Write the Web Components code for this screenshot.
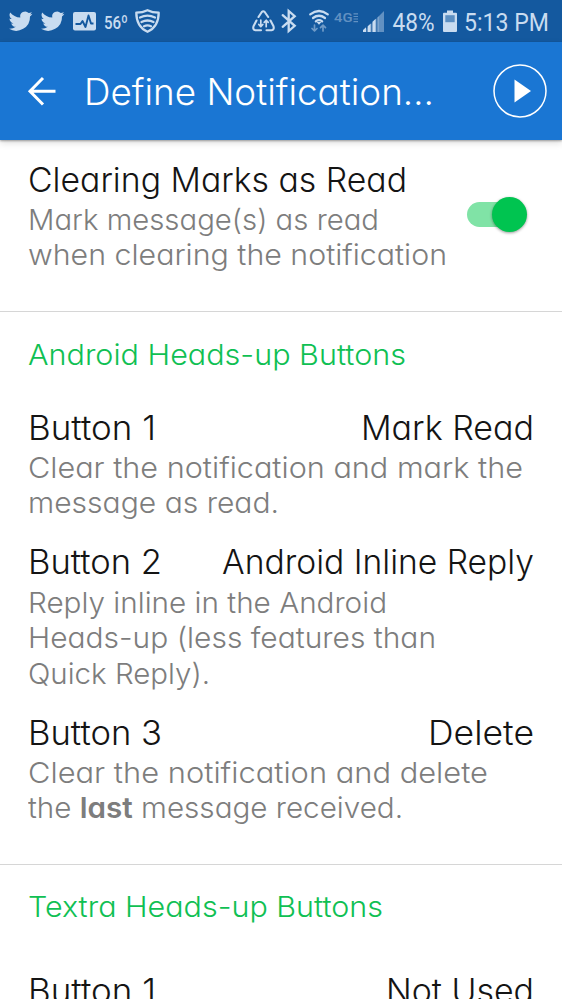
<!DOCTYPE html>
<html lang="en">
<head>
<meta charset="utf-8">
<title>Define Notification</title>
<style>
html,body{margin:0;height:999px;overflow:hidden;background:#fff}
body{font-family:Inter,"Liberation Sans",sans-serif;font-weight:300;font-feature-settings:"cv11","ss03";color:#141414}
</style>
</head>
<body>
<settings-screen></settings-screen>
<script>
const define=(name,html,init)=>customElements.define(name,class extends HTMLElement{
  connectedCallback(){
    if(this.shadowRoot)return;
    const t=document.createElement('template');
    t.innerHTML=html;
    this.attachShadow({mode:'open'}).append(t.content.cloneNode(true));
    if(init)init(this,this.shadowRoot);
  }
});

/* One line of text, widened to the width given in its "w" attribute. */
define('text-line',`<style>
:host{display:block;white-space:nowrap}
span{display:inline-block;transform-origin:0 50%}
</style><span><slot></slot></span>`,(el,root)=>{
  const w=+el.getAttribute('w'), s=root.querySelector('span');
  el.style.width=w+'px';
  s.style.transform='scaleX('+w/s.getBoundingClientRect().width+')';
});

define('status-bar',`<style>
:host{display:flex;flex:none;align-items:flex-start;height:42px;background:#14599f;color:#c9dcf0}
svg{display:block;flex:none;height:42px;overflow:visible;fill:currentColor}
.l{fill:none;stroke:currentColor;stroke-linecap:round;stroke-linejoin:round}
.push{margin-left:92px}
text{font-family:Roboto,sans-serif;font-weight:400;font-feature-settings:normal}
</style>
<svg width="24" viewBox="0 0 24 42" style="margin-left:9px"><path transform="translate(-.2 9.2)" d="M23.6 4.6c-.9.4-1.8.6-2.8.8 1-.6 1.8-1.6 2.2-2.7-.9.6-2 1-3.1 1.2A4.9 4.9 0 0 0 11.500 8.300C7.400 8.100 3.800 6.200 1.400 3.200A4.900 4.900 0 0 0 2.900 9.800c-.8 0-1.600-.2-2.200-.6 0 2.300 1.600 4.400 3.900 4.900-.7.2-1.500.2-2.200.1.600 2 2.400 3.400 4.600 3.400A9.900 9.900 0 0 1 .2 19.600a13.900 13.900 0 0 0 21-12.400c1-.7 1.800-1.600 2.400-2.600z"/></svg>
<svg width="24" viewBox="0 0 24 42" style="margin-left:8px"><path transform="translate(-.2 9.2)" d="M23.6 4.6c-.9.4-1.8.6-2.8.8 1-.6 1.8-1.6 2.2-2.7-.9.6-2 1-3.1 1.2A4.9 4.9 0 0 0 11.500 8.300C7.400 8.100 3.800 6.200 1.400 3.200A4.900 4.900 0 0 0 2.900 9.800c-.8 0-1.600-.2-2.200-.6 0 2.300 1.600 4.400 3.900 4.900-.7.2-1.500.2-2.200.1.600 2 2.400 3.400 4.600 3.400A9.900 9.900 0 0 1 .2 19.600a13.900 13.900 0 0 0 21-12.400c1-.7 1.800-1.600 2.400-2.600z"/></svg>
<svg width="23" viewBox="0 0 23 42" style="margin-left:8px"><rect y="12" width="23" height="18.500" rx="2"/><path d="M2.500 24h5l2-3 3 6 3-11.500 2.500 8h2.500" fill="none" stroke="#14599f" stroke-width="1.900" stroke-linejoin="round"/></svg>
<svg width="24" viewBox="0 0 24 42" style="margin-left:8px"><text x="0" y="28.500" font-size="19" style="font-weight:500" textLength="24" lengthAdjust="spacingAndGlyphs">56º</text></svg>
<svg width="25" viewBox="0 0 25 42" style="margin-left:7px"><g class="l" stroke-width="2.300"><path d="M12.500 10.200C9 12 5.500 12.700 1.300 12.700c0 9 3.700 15.600 11.200 19.100 7.500-3.500 11.200-10.100 11.200-19.100-4.200 0-7.700-.7-11.200-2.500z"/><path d="M5 17.500q7.500-3.600 15 0M6.500 22q6-3 12 0M9 26.300q3.500-1.800 7 0"/></g></svg>
<svg class="push" width="23" viewBox="0 0 23 42"><g class="l" stroke-width="2.100"><path d="M6.500 17l3.300-5q1.400-1.600 2.900 0l3.500 5M18.500 20.500l3 5.800q1 3.500-2 4h-5M9 30.300H3.500q-3-.5-2-4l3-5.800"/><path d="M8.800 20v6.500M6.800 24.500l2 2.200 2-2.200M14.200 26.700v-6.400M12.200 22.400l2-2.200 2 2.200" stroke-width="1.700"/></g></svg>
<svg width="16" viewBox="0 0 16 42" style="margin-left:6px"><path class="l" stroke-width="2.300" style="stroke-linejoin:miter" d="M1.700 15.200l12 10.600-6 5.200V11l6 5.200-12 10.600"/></svg>
<svg width="20" viewBox="0 0 20 42" style="margin-left:12px"><g class="l" stroke-width="2.200"><path d="M1.200 14.300q8.800-6.600 17.600 0M4 18q6-4.500 12 0M6.800 21.300q3.200-2.400 6.400 0"/></g><path d="M7.500 21.900h5L10 24.800z"/><g class="l" stroke-width="1.700" opacity=".5"><path d="M5.500 25v5.800M3 28.500l2.500 2.500 2.500-2.500M14 31v-5.800M11.500 27.600l2.500-2.500 2.500 2.500"/></g></svg>
<svg width="25" viewBox="0 0 25 42" style="margin-left:5px;opacity:.43"><text x="0" y="22.300" font-size="13" style="font-weight:500" textLength="18.500" lengthAdjust="spacingAndGlyphs">4G</text><path d="M19.500 13.800h4.500M19.500 16.500h4.500M19.500 19h4.500M19.500 21.600h4.500" stroke="currentColor" stroke-width="1.200"/></svg>
<svg width="21" viewBox="0 0 21 42" style="margin-left:4px"><path opacity=".43" d="M14.500 17.500L21 11v21h-6.500z"/><path opacity=".25" d="M0 32L16 16v16z"/><path d="M0 32v-2l3-2.800V32zM4.700 32v-5.700l3-2.800V32zM9.500 32V21.800l3.200-3V32z"/></svg>
<svg width="42" viewBox="0 0 42 42" style="margin-left:8px"><text x="0.500" y="31" font-size="26.300" textLength="42" lengthAdjust="spacingAndGlyphs">48%</text></svg>
<svg width="14" viewBox="0 0 14 42" style="margin-left:8.500px"><path d="M4 10.500h6v2.200H4zM1 12.700h12q1 0 1 1V31q0 1-1 1H1Q0 32 0 31V13.700q0-1 1-1z"/><path d="M2.300 15.200h9.400v7H2.300z" fill="#5c8fc2"/></svg>
<svg width="84" viewBox="0 0 84 42" style="margin-left:7.500px"><text x="0" y="31" font-size="26.300" textLength="85" lengthAdjust="spacingAndGlyphs">5:13 PM</text></svg>`);

define('app-bar',`<style>
:host{display:flex;flex:none;align-items:center;box-sizing:border-box;height:98px;padding:0 15.500px 0 27px;background:#1a76d3;color:#fff;box-shadow:0 1px 2px #0005,0 3px 7px #0002;position:relative}
svg{display:block;flex:none}
.t{flex:1;margin-left:27px;font-size:36.500px;line-height:48px;padding-top:2px}
</style>
<svg width="30" height="30" viewBox="0 0 30 30" fill="none" stroke="#fff" stroke-width="3"><path d="M16 2L3 15.200 16 28.500M3 15.200H28.500"/></svg>
<div class="t"><slot></slot></div>
<svg width="54" height="54" viewBox="0 0 54 54"><circle cx="27" cy="27" r="26" fill="none" stroke="#fff" stroke-width="1.500"/><path d="M21.500 15.500L38 27 21.500 38.500z" fill="#fff"/></svg>`);

define('toggle-switch',`<style>
:host{display:flex;align-items:center;justify-content:flex-end;width:61px;height:25px;border-radius:13px;background:linear-gradient(90deg,#80e3a6 48px,transparent 48px)}
i{display:block;width:35px;height:35px;border-radius:50%;background:#00c450;box-shadow:0 1px 3px #0006}
</style><i></i>`);

define('setting-row',`<style>
:host{display:grid;grid-template-columns:1fr auto;align-content:start;padding:0 28px;margin-bottom:var(--gap,21.500px)}
.n,.v{font-size:33.500px;line-height:40px;height:42.500px}
.d{grid-column:1/3;font-size:29px;line-height:35.400px;color:#7d7d7d}
</style><div class="n"><slot name="name"></slot></div><div class="v"><slot name="value"></slot></div><div class="d"><slot></slot></div>`);

define('section-title',`<style>
:host{display:block;padding:24.500px 27.500px 0;margin-bottom:35px;font-size:29px;line-height:36px;color:#0fc053;border-top:1px solid #d6d6d6}
</style><slot></slot>`);

define('settings-screen',`<style>
:host{display:flex;flex-direction:column;height:999px;overflow:hidden}
main{padding-top:19.500px;white-space:nowrap}
.top{display:flex;justify-content:space-between;padding-right:35px;height:151.500px}
toggle-switch{margin-top:42.500px}
b{font-weight:600}
</style>
<status-bar></status-bar>
<app-bar><text-line w="350">Define Notification…</text-line></app-bar>
<main>
<div class="top">
<setting-row><text-line slot="name" w="379">Clearing Marks as Read</text-line>
<text-line w="351">Mark message(s) as read</text-line><text-line w="419">when clearing the notification</text-line></setting-row>
<toggle-switch></toggle-switch></div>
<section-title><text-line w="378">Android Heads-up Buttons</text-line></section-title>
<setting-row><text-line slot="name" w="128">Button 1</text-line><text-line slot="value" w="173">Mark Read</text-line>
<text-line w="495">Clear the notification and mark the</text-line><text-line w="251">message as read.</text-line></setting-row>
<setting-row><text-line slot="name" w="134">Button 2</text-line><text-line slot="value" w="312">Android Inline Reply</text-line>
<text-line w="359">Reply inline in the Android</text-line><text-line w="408">Heads-up (less features than</text-line><text-line w="182">Quick Reply).</text-line></setting-row>
<setting-row style="--gap:38px"><text-line slot="name" w="134">Button 3</text-line><text-line slot="value" w="106">Delete</text-line>
<text-line w="460">Clear the notification and delete</text-line><text-line w="375">the <b>last</b> message received.</text-line></setting-row>
<section-title style="margin-bottom:46px"><text-line w="355">Textra Heads-up Buttons</text-line></section-title>
<setting-row><text-line slot="name" w="128">Button 1</text-line><text-line slot="value" w="148">Not Used</text-line></setting-row>
</main>`);
</script>
</body>
</html>
